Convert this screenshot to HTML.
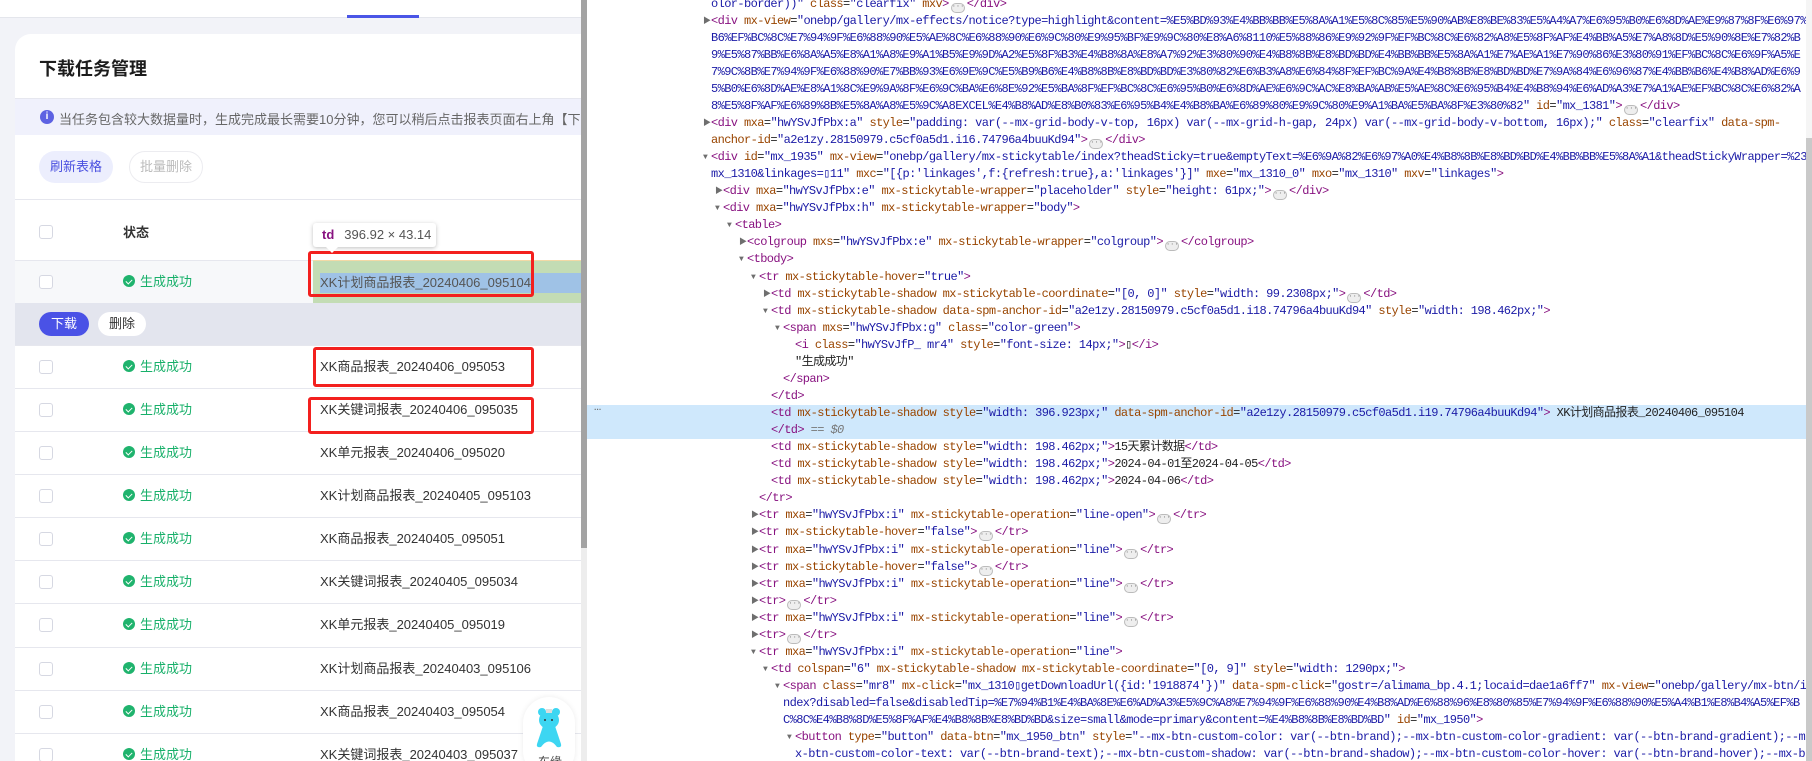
<!DOCTYPE html>
<html><head><meta charset="utf-8">
<style>
*{margin:0;padding:0;box-sizing:border-box}
body{width:1812px;height:761px;overflow:hidden;background:#fff;position:relative;font-family:"Liberation Sans","Noto Sans CJK SC",sans-serif}
.ab{position:absolute}
#left{position:absolute;left:0;top:0;width:581px;height:761px;overflow:hidden;background:#f2f3f8}
.cb{position:absolute;left:39px;width:14px;height:14px;border:1px solid #d6d8e2;border-radius:3px;background:#fff}
.row{position:absolute;left:15px;width:600px;height:43px;border-top:1px solid #e6e7ee}
.st{position:absolute;left:123px;font-size:13px;color:#18b06a;line-height:14px}
.st i{display:inline-block;width:12px;height:12px;border-radius:50%;background:#1fb36d;vertical-align:-1px;margin-right:5px;position:relative}
.st i:after{content:"";position:absolute;left:3.5px;top:2.5px;width:3px;height:5px;border:solid #fff;border-width:0 1.6px 1.6px 0;transform:rotate(45deg)}
.fn{position:absolute;left:320px;font-size:13px;color:#333;white-space:nowrap;line-height:14px}
.red{position:absolute;border:3px solid #f3201e;border-radius:3px}
#dev{position:absolute;left:587px;top:0;width:1219px;height:761px;overflow:hidden;background:#fff}
#code{position:absolute;left:0;top:-4.5px;width:1219px;font-family:"Liberation Mono","Noto Sans CJK SC",monospace;font-size:12px;letter-spacing:-0.6px;line-height:17.07px;color:#222}
#code div{white-space:pre;height:17.07px;position:relative;overflow:hidden}
.t{color:#881280}.a{color:#994500}.v{color:#1a1aa6}
.tr{position:absolute;font-size:8px;color:#6e6e6e;letter-spacing:0}
.e{display:inline-block;width:14px;height:10px;border:1px solid #bbb;border-radius:5px;background:#eee;vertical-align:-1px;font-size:7px;line-height:6px;text-align:center;color:#777;letter-spacing:0;margin:0 2px}
</style></head><body>
<div id="left">
  <div class="ab" style="left:0;top:0;width:581px;height:18px;background:#fff;border-bottom:1px solid #e4e6ec"></div>
  <div class="ab" style="left:347px;top:15px;width:72px;height:3px;background:#4a55e6"></div>
  <div class="ab" style="left:15px;top:34px;width:620px;height:760px;background:#fff;border-radius:16px"></div>
  <div class="ab" style="left:39px;top:55px;font-size:18px;font-weight:bold;color:#1c1c1c">下载任务管理</div>
  <div class="ab" style="left:15px;top:98px;width:600px;height:37px;background:#f0f1fc;border-top:1px solid #e6e7ef"></div>
  <div class="ab" style="left:40px;top:110px;width:14px;height:14px;border-radius:50%;background:#5d62e2;color:#fff;font-size:10px;font-weight:bold;text-align:center;line-height:14px">i</div>
  <div class="ab" style="left:59px;top:109px;font-size:13px;color:#666;white-space:nowrap">当任务包含较大数据量时，生成完成最长需要10分钟，您可以稍后点击报表页面右上角【下载任务管理】，查看生成结果并下载。</div>
  <div class="ab" style="left:39px;top:151px;width:74px;height:32px;border-radius:16px;background:#eceefd;color:#4a50e0;font-size:13px;text-align:center;line-height:32px">刷新表格</div>
  <div class="ab" style="left:129px;top:151px;width:74px;height:32px;border-radius:16px;border:1px solid #ececf0;color:#bbb;font-size:13px;text-align:center;line-height:30px">批量删除</div>
  <div class="ab" style="left:15px;top:199px;width:600px;height:1px;background:#e6e7ee"></div>
  <div class="cb" style="top:225px"></div>
  <div class="ab" style="left:123px;top:222px;font-size:13px;font-weight:bold;color:#333">状态</div>

  <div class="row" style="top:260px;background:#f7f8fa"></div>
  <div class="ab" style="left:313px;top:261px;width:270px;height:42px;background:#c3dcb4"></div>
  <div class="ab" style="left:313px;top:260px;width:270px;height:1px;background:#f3d9a6"></div>
  <div class="ab" style="left:320px;top:273px;width:270px;height:20px;background:#9fc2e6"></div>
  <div class="cb" style="top:275px"></div>
  <div class="st" style="top:275px"><i></i>生成成功</div>
  <div class="fn" style="top:276px;color:#555">XK计划商品报表_20240406_095104</div>

  <div class="ab" style="left:15px;top:303px;width:600px;height:42px;background:#e3e5ee"></div>
  <div class="ab" style="left:39px;top:312px;width:50px;height:24px;border-radius:12px;background:#4a52e6;color:#fff;font-size:13px;text-align:center;line-height:24px">下载</div>
  <div class="ab" style="left:98px;top:312px;width:48px;height:24px;border-radius:12px;background:#fff;color:#333;font-size:13px;text-align:center;line-height:24px">删除</div>

  <div class="row" style="top:345px"></div><div class="cb" style="top:360px"></div><div class="st" style="top:360px"><i></i>生成成功</div><div class="fn" style="top:360px">XK商品报表_20240406_095053</div>
  <div class="row" style="top:388px"></div><div class="cb" style="top:403px"></div><div class="st" style="top:403px"><i></i>生成成功</div><div class="fn" style="top:403px">XK关键词报表_20240406_095035</div>
  <div class="row" style="top:431px"></div><div class="cb" style="top:446px"></div><div class="st" style="top:446px"><i></i>生成成功</div><div class="fn" style="top:446px">XK单元报表_20240406_095020</div>
  <div class="row" style="top:474px"></div><div class="cb" style="top:489px"></div><div class="st" style="top:489px"><i></i>生成成功</div><div class="fn" style="top:489px">XK计划商品报表_20240405_095103</div>
  <div class="row" style="top:517px"></div><div class="cb" style="top:532px"></div><div class="st" style="top:532px"><i></i>生成成功</div><div class="fn" style="top:532px">XK商品报表_20240405_095051</div>
  <div class="row" style="top:560px"></div><div class="cb" style="top:575px"></div><div class="st" style="top:575px"><i></i>生成成功</div><div class="fn" style="top:575px">XK关键词报表_20240405_095034</div>
  <div class="row" style="top:603px"></div><div class="cb" style="top:618px"></div><div class="st" style="top:618px"><i></i>生成成功</div><div class="fn" style="top:618px">XK单元报表_20240405_095019</div>
  <div class="row" style="top:647px"></div><div class="cb" style="top:662px"></div><div class="st" style="top:662px"><i></i>生成成功</div><div class="fn" style="top:662px">XK计划商品报表_20240403_095106</div>
  <div class="row" style="top:690px"></div><div class="cb" style="top:705px"></div><div class="st" style="top:705px"><i></i>生成成功</div><div class="fn" style="top:705px">XK商品报表_20240403_095054</div>
  <div class="row" style="top:733px"></div><div class="cb" style="top:748px"></div><div class="st" style="top:748px"><i></i>生成成功</div><div class="fn" style="top:748px">XK关键词报表_20240403_095037</div>

  <div class="red" style="left:308px;top:251px;width:226px;height:46px"></div>
  <div class="red" style="left:313px;top:347px;width:221px;height:40px"></div>
  <div class="red" style="left:308px;top:397px;width:226px;height:37px"></div>

  <div class="ab" style="left:313px;top:223px;width:123px;height:24px;background:#fff;border-radius:3px;box-shadow:0 1px 4px rgba(0,0,0,.25);font-size:13px;line-height:24px;padding-left:9px;white-space:nowrap"><b style="color:#881280">td</b><span style="color:#555;margin-left:10px">396.92 × 43.14</span></div>
  <div class="ab" style="left:326px;top:247px;width:0;height:0;border-left:6px solid transparent;border-right:6px solid transparent;border-top:6px solid #fff"></div>

  <div class="ab" style="left:523px;top:697px;width:52px;height:80px;background:#fff;border-radius:26px;box-shadow:0 0 6px rgba(0,0,0,.08)"></div>
  <svg class="ab" style="left:533px;top:708px" width="32" height="42" viewBox="0 0 32 42">
    <circle cx="9" cy="4" r="4" fill="#3dd6f2"/><circle cx="23" cy="4" r="4" fill="#3dd6f2"/>
    <ellipse cx="16" cy="12" rx="10" ry="9" fill="#3dd6f2"/>
    <path d="M10 18 L4 36 Q3 40 8 39 Q16 28 24 39 Q29 40 28 36 L22 18 Z" fill="#3dd6f2"/>
    <circle cx="12" cy="12" r="1" fill="#333"/><circle cx="19" cy="12" r="1" fill="#333"/>
    <rect x="13" y="1" width="6" height="4" fill="#ddd"/>
  </svg>
  <div class="ab" style="left:538px;top:753px;font-size:12px;color:#444">东缘</div>
</div>
<div class="ab" style="left:581px;top:0;width:6px;height:761px;background:#ededed"></div>
<div class="ab" style="left:581px;top:0;width:6px;height:548px;background:#a3a3a3"></div>

<div id="dev">
  <div class="ab" style="left:0;top:405px;width:1219px;height:34px;background:#cfe8fc"></div>
  <div class="ab" style="left:7px;top:400px;font-size:12px;color:#666;font-family:'Liberation Mono',monospace">…</div>
  <div id="code">
<div style="padding-left:124px"><span class="v">olor-border))"</span> <span class="a">class</span>=<span class="v">"clearfix"</span> <span class="a">mxv</span><span class="t">&gt;</span><span class="e">···</span><span class="t">&lt;/div&gt;</span></div>
<div style="padding-left:124px"><span class="tr" style="left:116px">▶</span><span class="t">&lt;div</span> <span class="a">mx-view</span>=<span class="v">"onebp/gallery/mx-effects/notice?type=highlight&amp;content=%E5%BD%93%E4%BB%BB%E5%8A%A1%E5%8C%85%E5%90%AB%E8%BE%83%E5%A4%A7%E6%95%B0%E6%8D%AE%E9%87%8F%E6%97%</span></div>
<div style="padding-left:124px" class="v">B6%EF%BC%8C%E7%94%9F%E6%88%90%E5%AE%8C%E6%88%90%E6%9C%80%E9%95%BF%E9%9C%80%E8%A6%8110%E5%88%86%E9%92%9F%EF%BC%8C%E6%82%A8%E5%8F%AF%E4%BB%A5%E7%A8%8D%E5%90%8E%E7%82%B</div>
<div style="padding-left:124px" class="v">9%E5%87%BB%E6%8A%A5%E8%A1%A8%E9%A1%B5%E9%9D%A2%E5%8F%B3%E4%B8%8A%E8%A7%92%E3%80%90%E4%B8%8B%E8%BD%BD%E4%BB%BB%E5%8A%A1%E7%AE%A1%E7%90%86%E3%80%91%EF%BC%8C%E6%9F%A5%E</div>
<div style="padding-left:124px" class="v">7%9C%8B%E7%94%9F%E6%88%90%E7%BB%93%E6%9E%9C%E5%B9%B6%E4%B8%8B%E8%BD%BD%E3%80%82%E6%B3%A8%E6%84%8F%EF%BC%9A%E4%B8%8B%E8%BD%BD%E7%9A%84%E6%96%87%E4%BB%B6%E4%B8%AD%E6%9</div>
<div style="padding-left:124px" class="v">5%B0%E6%8D%AE%E8%A1%8C%E9%9A%8F%E6%9C%BA%E6%8E%92%E5%BA%8F%EF%BC%8C%E6%95%B0%E6%8D%AE%E6%9C%AC%E8%BA%AB%E5%AE%8C%E6%95%B4%E4%B8%94%E6%AD%A3%E7%A1%AE%EF%BC%8C%E6%82%A</div>
<div style="padding-left:124px"><span class="v">8%E5%8F%AF%E6%89%8B%E5%8A%A8%E5%9C%A8EXCEL%E4%B8%AD%E8%B0%83%E6%95%B4%E4%B8%BA%E6%89%80%E9%9C%80%E9%A1%BA%E5%BA%8F%E3%80%82"</span> <span class="a">id</span>=<span class="v">"mx_1381"</span><span class="t">&gt;</span><span class="e">···</span><span class="t">&lt;/div&gt;</span></div>
<div style="padding-left:124px"><span class="tr" style="left:116px">▶</span><span class="t">&lt;div</span> <span class="a">mxa</span>=<span class="v">"hwYSvJfPbx:a"</span> <span class="a">style</span>=<span class="v">"padding: var(--mx-grid-body-v-top, 16px) var(--mx-grid-h-gap, 24px) var(--mx-grid-body-v-bottom, 16px);"</span> <span class="a">class</span>=<span class="v">"clearfix"</span> <span class="a">data-spm-</span></div>
<div style="padding-left:124px"><span class="a">anchor-id</span>=<span class="v">"a2e1zy.28150979.c5cf0a5d1.i16.74796a4buuKd94"</span><span class="t">&gt;</span><span class="e">···</span><span class="t">&lt;/div&gt;</span></div>
<div style="padding-left:124px"><span class="tr" style="left:116px">▼</span><span class="t">&lt;div</span> <span class="a">id</span>=<span class="v">"mx_1935"</span> <span class="a">mx-view</span>=<span class="v">"onebp/gallery/mx-stickytable/index?theadSticky=true&amp;emptyText=%E6%9A%82%E6%97%A0%E4%B8%8B%E8%BD%BD%E4%BB%BB%E5%8A%A1&amp;theadStickyWrapper=%23</span></div>
<div style="padding-left:124px"><span class="v">mx_1310&amp;linkages=▯11"</span> <span class="a">mxc</span>=<span class="v">"[{p:'linkages',f:{refresh:true},a:'linkages'}]"</span> <span class="a">mxe</span>=<span class="v">"mx_1310_0"</span> <span class="a">mxo</span>=<span class="v">"mx_1310"</span> <span class="a">mxv</span>=<span class="v">"linkages"</span><span class="t">&gt;</span></div>
<div style="padding-left:136px"><span class="tr" style="left:128px">▶</span><span class="t">&lt;div</span> <span class="a">mxa</span>=<span class="v">"hwYSvJfPbx:e"</span> <span class="a">mx-stickytable-wrapper</span>=<span class="v">"placeholder"</span> <span class="a">style</span>=<span class="v">"height: 61px;"</span><span class="t">&gt;</span><span class="e">···</span><span class="t">&lt;/div&gt;</span></div>
<div style="padding-left:136px"><span class="tr" style="left:128px">▼</span><span class="t">&lt;div</span> <span class="a">mxa</span>=<span class="v">"hwYSvJfPbx:h"</span> <span class="a">mx-stickytable-wrapper</span>=<span class="v">"body"</span><span class="t">&gt;</span></div>
<div style="padding-left:148px"><span class="tr" style="left:140px">▼</span><span class="t">&lt;table&gt;</span></div>
<div style="padding-left:160px"><span class="tr" style="left:152px">▶</span><span class="t">&lt;colgroup</span> <span class="a">mxs</span>=<span class="v">"hwYSvJfPbx:e"</span> <span class="a">mx-stickytable-wrapper</span>=<span class="v">"colgroup"</span><span class="t">&gt;</span><span class="e">···</span><span class="t">&lt;/colgroup&gt;</span></div>
<div style="padding-left:160px"><span class="tr" style="left:152px">▼</span><span class="t">&lt;tbody&gt;</span></div>
<div style="padding-left:172px"><span class="tr" style="left:164px">▼</span><span class="t">&lt;tr</span> <span class="a">mx-stickytable-hover</span>=<span class="v">"true"</span><span class="t">&gt;</span></div>
<div style="padding-left:184px"><span class="tr" style="left:176px">▶</span><span class="t">&lt;td</span> <span class="a">mx-stickytable-shadow mx-stickytable-coordinate</span>=<span class="v">"[0, 0]"</span> <span class="a">style</span>=<span class="v">"width: 99.2308px;"</span><span class="t">&gt;</span><span class="e">···</span><span class="t">&lt;/td&gt;</span></div>
<div style="padding-left:184px"><span class="tr" style="left:176px">▼</span><span class="t">&lt;td</span> <span class="a">mx-stickytable-shadow data-spm-anchor-id</span>=<span class="v">"a2e1zy.28150979.c5cf0a5d1.i18.74796a4buuKd94"</span> <span class="a">style</span>=<span class="v">"width: 198.462px;"</span><span class="t">&gt;</span></div>
<div style="padding-left:196px"><span class="tr" style="left:188px">▼</span><span class="t">&lt;span</span> <span class="a">mxs</span>=<span class="v">"hwYSvJfPbx:g"</span> <span class="a">class</span>=<span class="v">"color-green"</span><span class="t">&gt;</span></div>
<div style="padding-left:208px"><span class="t">&lt;i</span> <span class="a">class</span>=<span class="v">"hwYSvJfP_ mr4"</span> <span class="a">style</span>=<span class="v">"font-size: 14px;"</span><span class="t">&gt;</span>▯<span class="t">&lt;/i&gt;</span></div>
<div style="padding-left:208px">"生成成功"</div>
<div style="padding-left:196px"><span class="t">&lt;/span&gt;</span></div>
<div style="padding-left:184px"><span class="t">&lt;/td&gt;</span></div>
<div style="padding-left:184px"><span class="t">&lt;td</span> <span class="a">mx-stickytable-shadow</span> <span class="a">style</span>=<span class="v">"width: 396.923px;"</span> <span class="a">data-spm-anchor-id</span>=<span class="v">"a2e1zy.28150979.c5cf0a5d1.i19.74796a4buuKd94"</span><span class="t">&gt;</span> XK计划商品报表_20240406_095104</div>
<div style="padding-left:184px"><span class="t">&lt;/td&gt;</span> <span style="color:#777">== <i>$0</i></span></div>
<div style="padding-left:184px"><span class="t">&lt;td</span> <span class="a">mx-stickytable-shadow</span> <span class="a">style</span>=<span class="v">"width: 198.462px;"</span><span class="t">&gt;</span>15天累计数据<span class="t">&lt;/td&gt;</span></div>
<div style="padding-left:184px"><span class="t">&lt;td</span> <span class="a">mx-stickytable-shadow</span> <span class="a">style</span>=<span class="v">"width: 198.462px;"</span><span class="t">&gt;</span>2024-04-01至2024-04-05<span class="t">&lt;/td&gt;</span></div>
<div style="padding-left:184px"><span class="t">&lt;td</span> <span class="a">mx-stickytable-shadow</span> <span class="a">style</span>=<span class="v">"width: 198.462px;"</span><span class="t">&gt;</span>2024-04-06<span class="t">&lt;/td&gt;</span></div>
<div style="padding-left:172px"><span class="t">&lt;/tr&gt;</span></div>
<div style="padding-left:172px"><span class="tr" style="left:164px">▶</span><span class="t">&lt;tr</span> <span class="a">mxa</span>=<span class="v">"hwYSvJfPbx:i"</span> <span class="a">mx-stickytable-operation</span>=<span class="v">"line-open"</span><span class="t">&gt;</span><span class="e">···</span><span class="t">&lt;/tr&gt;</span></div>
<div style="padding-left:172px"><span class="tr" style="left:164px">▶</span><span class="t">&lt;tr</span> <span class="a">mx-stickytable-hover</span>=<span class="v">"false"</span><span class="t">&gt;</span><span class="e">···</span><span class="t">&lt;/tr&gt;</span></div>
<div style="padding-left:172px"><span class="tr" style="left:164px">▶</span><span class="t">&lt;tr</span> <span class="a">mxa</span>=<span class="v">"hwYSvJfPbx:i"</span> <span class="a">mx-stickytable-operation</span>=<span class="v">"line"</span><span class="t">&gt;</span><span class="e">···</span><span class="t">&lt;/tr&gt;</span></div>
<div style="padding-left:172px"><span class="tr" style="left:164px">▶</span><span class="t">&lt;tr</span> <span class="a">mx-stickytable-hover</span>=<span class="v">"false"</span><span class="t">&gt;</span><span class="e">···</span><span class="t">&lt;/tr&gt;</span></div>
<div style="padding-left:172px"><span class="tr" style="left:164px">▶</span><span class="t">&lt;tr</span> <span class="a">mxa</span>=<span class="v">"hwYSvJfPbx:i"</span> <span class="a">mx-stickytable-operation</span>=<span class="v">"line"</span><span class="t">&gt;</span><span class="e">···</span><span class="t">&lt;/tr&gt;</span></div>
<div style="padding-left:172px"><span class="tr" style="left:164px">▶</span><span class="t">&lt;tr&gt;</span><span class="e">···</span><span class="t">&lt;/tr&gt;</span></div>
<div style="padding-left:172px"><span class="tr" style="left:164px">▶</span><span class="t">&lt;tr</span> <span class="a">mxa</span>=<span class="v">"hwYSvJfPbx:i"</span> <span class="a">mx-stickytable-operation</span>=<span class="v">"line"</span><span class="t">&gt;</span><span class="e">···</span><span class="t">&lt;/tr&gt;</span></div>
<div style="padding-left:172px"><span class="tr" style="left:164px">▶</span><span class="t">&lt;tr&gt;</span><span class="e">···</span><span class="t">&lt;/tr&gt;</span></div>
<div style="padding-left:172px"><span class="tr" style="left:164px">▼</span><span class="t">&lt;tr</span> <span class="a">mxa</span>=<span class="v">"hwYSvJfPbx:i"</span> <span class="a">mx-stickytable-operation</span>=<span class="v">"line"</span><span class="t">&gt;</span></div>
<div style="padding-left:184px"><span class="tr" style="left:176px">▼</span><span class="t">&lt;td</span> <span class="a">colspan</span>=<span class="v">"6"</span> <span class="a">mx-stickytable-shadow mx-stickytable-coordinate</span>=<span class="v">"[0, 9]"</span> <span class="a">style</span>=<span class="v">"width: 1290px;"</span><span class="t">&gt;</span></div>
<div style="padding-left:196px"><span class="tr" style="left:188px">▼</span><span class="t">&lt;span</span> <span class="a">class</span>=<span class="v">"mr8"</span> <span class="a">mx-click</span>=<span class="v">"mx_1310▯getDownloadUrl({id:'1918874'})"</span> <span class="a">data-spm-click</span>=<span class="v">"gostr=/alimama_bp.4.1;locaid=dae1a6ff7"</span> <span class="a">mx-view</span>=<span class="v">"onebp/gallery/mx-btn/i</span></div>
<div style="padding-left:196px" class="v">ndex?disabled=false&amp;disabledTip=%E7%94%B1%E4%BA%8E%E6%AD%A3%E5%9C%A8%E7%94%9F%E6%88%90%E4%B8%AD%E6%88%96%E8%80%85%E7%94%9F%E6%88%90%E5%A4%B1%E8%B4%A5%EF%B</div>
<div style="padding-left:196px"><span class="v">C%8C%E4%B8%8D%E5%8F%AF%E4%B8%8B%E8%BD%BD&amp;size=small&amp;mode=primary&amp;content=%E4%B8%8B%E8%BD%BD"</span> <span class="a">id</span>=<span class="v">"mx_1950"</span><span class="t">&gt;</span></div>
<div style="padding-left:208px"><span class="tr" style="left:200px">▼</span><span class="t">&lt;button</span> <span class="a">type</span>=<span class="v">"button"</span> <span class="a">data-btn</span>=<span class="v">"mx_1950_btn"</span> <span class="a">style</span>=<span class="v">"--mx-btn-custom-color: var(--btn-brand);--mx-btn-custom-color-gradient: var(--btn-brand-gradient);--m</span></div>
<div style="padding-left:208px" class="v">x-btn-custom-color-text: var(--btn-brand-text);--mx-btn-custom-shadow: var(--btn-brand-shadow);--mx-btn-custom-color-hover: var(--btn-brand-hover);--mx-b</div>
  </div>
</div>
<div class="ab" style="left:1806px;top:0;width:6px;height:761px;background:#f5f5f5"></div>
<div class="ab" style="left:1806px;top:138px;width:6px;height:623px;background:#c9c9c9"></div>
</body></html>
